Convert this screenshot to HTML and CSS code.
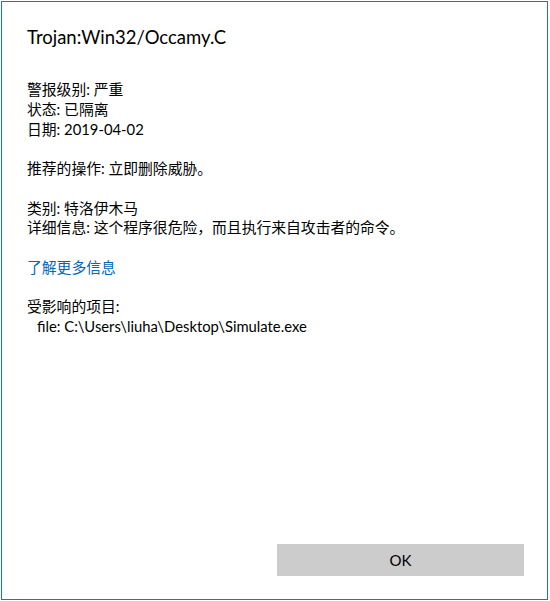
FILE: index.html
```html
<html lang="zh-CN">
<head>
  <meta charset="UTF-8">
  <meta name="viewport" content="width=device-width, initial-scale=1.0">
  <title>Trojan:Win32/Occamy.C</title>
  <link rel="stylesheet" href="styles.css">
</head>
<body>
  <div class="dialog">
    <h1 class="title">Trojan:Win32/Occamy.C</h1>

    <!-- Threat summary -->
    <div class="block">
      <p>警报级别: 严重</p>
      <p>状态: 已隔离</p>
      <p>日期: 2019-04-02</p>
    </div>

    <div class="block">
      <p>推荐的操作: 立即删除威胁。</p>
    </div>

    <div class="block">
      <p>类别: 特洛伊木马</p>
      <p>详细信息: 这个程序很危险，而且执行来自攻击者的命令。</p>
    </div>

    <div class="block">
      <a class="more" href="#">了解更多信息</a>
    </div>

    <!-- Affected items -->
    <div class="block">
      <p>受影响的项目:</p>
      <p class="item">file: C:\Users\liuha\Desktop\Simulate.exe</p>
    </div>

    <div class="actions">
      <button class="ok">OK</button>
    </div>
  </div>
</body>
</html>
```

FILE: styles.css
```css
/* General Styling */
body {
  margin: 0;
  padding: 0;
  background: #fff;
  font-family: Lato, "Noto Sans CJK SC", sans-serif;
  color: #000;
}

.dialog {
  box-sizing: border-box;
  width: 547px;
  height: 599px;
  margin: 1px 0 0 1px;
  border: 1px solid #1874cd;
  padding: 21px 23px 23px 25px;
  display: flex;
  flex-direction: column;
}

.title {
  margin: 0 0 29px;
  font-size: 18.5px;
  font-weight: normal;
  line-height: 28px;
}

.block {
  margin-bottom: 19.75px;
  font-size: 14.8px;
  line-height: 19.75px;
}

.block p {
  margin: 0;
}

.item {
  padding-left: 10px;
}

.more {
  color: #0067c0;
  text-decoration: none;
}

.actions {
  margin-top: auto;
  display: flex;
  justify-content: flex-end;
}

.ok {
  width: 247px;
  height: 32px;
  border: none;
  background: #cccccc;
  color: #000;
  font-family: Lato, sans-serif;
  font-size: 15px;
  padding: 0;
}
```
